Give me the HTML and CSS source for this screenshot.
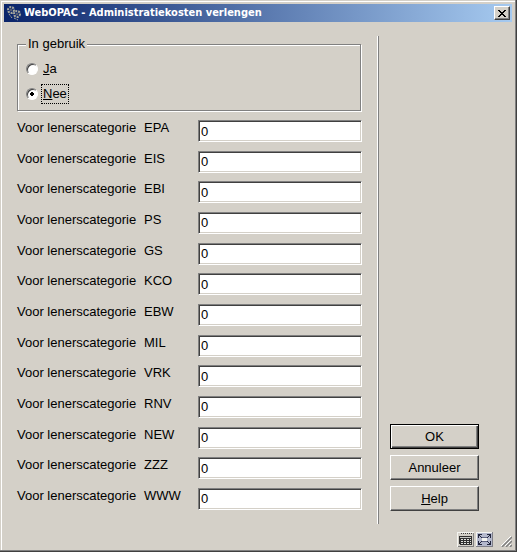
FILE: index.html
```
<!DOCTYPE html>
<html lang="nl">
<head>
    <meta charset="UTF-8">
    <meta name="viewport" content="width=device-width, initial-scale=1.0">
    <title>WebOPAC - Administratiekosten verlengen</title>
    <link rel="stylesheet" href="styles.css">
</head>
<body>

<form class="window">
    <header class="titlebar">
        <svg class="app-icon" width="16" height="16" viewBox="0 0 16 16">
            <g fill="none" stroke="#a8a89c">
                <circle cx="5" cy="5" r="3" stroke-width="2" stroke-dasharray="2 1"/>
                <circle cx="5" cy="5" r="1" stroke="#6c7078"/>
                <circle cx="11" cy="9" r="3" stroke-width="2" stroke-dasharray="2 1"/>
                <circle cx="11" cy="9" r="1" stroke="#6c7078"/>
                <path d="M3 9l3 4M8 13l4 2" stroke-dasharray="2 1"/>
            </g>
        </svg>
        <h1>WebOPAC - Administratiekosten verlengen</h1>
        <button type="button" class="close" aria-label="Sluiten">
            <svg width="8" height="7" viewBox="0 0 8 7" shape-rendering="crispEdges">
                <path d="M0 0h2v1h1v1h2v-1h1v-1h2v1h-1v1h-1v1h-1v1h1v1h1v1h1v1h-2v-1h-1v-1h-2v1h-1v1h-2v-1h1v-1h1v-1h1v-1h-1v-1h-1v-1h-1z"/>
            </svg>
        </button>
    </header>

    <main class="content">
        <div class="fields">
            <fieldset>
                <legend>In gebruik</legend>
                <label class="option"><input type="radio" name="gebruik"><span><u>J</u>a</span></label>
                <label class="option"><input type="radio" name="gebruik" checked><span class="focused"><u>N</u>ee</span></label>
            </fieldset>

            <div class="rows">
                <div class="row"><label for="epa"><span>Voor lenerscategorie</span><span>EPA</span></label><input type="text" id="epa" value="0"></div>
                <div class="row"><label for="eis"><span>Voor lenerscategorie</span><span>EIS</span></label><input type="text" id="eis" value="0"></div>
                <div class="row"><label for="ebi"><span>Voor lenerscategorie</span><span>EBI</span></label><input type="text" id="ebi" value="0"></div>
                <div class="row"><label for="ps"><span>Voor lenerscategorie</span><span>PS</span></label><input type="text" id="ps" value="0"></div>
                <div class="row"><label for="gs"><span>Voor lenerscategorie</span><span>GS</span></label><input type="text" id="gs" value="0"></div>
                <div class="row"><label for="kco"><span>Voor lenerscategorie</span><span>KCO</span></label><input type="text" id="kco" value="0"></div>
                <div class="row"><label for="ebw"><span>Voor lenerscategorie</span><span>EBW</span></label><input type="text" id="ebw" value="0"></div>
                <div class="row"><label for="mil"><span>Voor lenerscategorie</span><span>MIL</span></label><input type="text" id="mil" value="0"></div>
                <div class="row"><label for="vrk"><span>Voor lenerscategorie</span><span>VRK</span></label><input type="text" id="vrk" value="0"></div>
                <div class="row"><label for="rnv"><span>Voor lenerscategorie</span><span>RNV</span></label><input type="text" id="rnv" value="0"></div>
                <div class="row"><label for="new"><span>Voor lenerscategorie</span><span>NEW</span></label><input type="text" id="new" value="0"></div>
                <div class="row"><label for="zzz"><span>Voor lenerscategorie</span><span>ZZZ</span></label><input type="text" id="zzz" value="0"></div>
                <div class="row"><label for="www"><span>Voor lenerscategorie</span><span>WWW</span></label><input type="text" id="www" value="0"></div>
            </div>
        </div>

        <div class="actions">
            <button type="submit" class="btn default">OK</button>
            <button type="button" class="btn">Annuleer</button>
            <button type="button" class="btn"><u>H</u>elp</button>
        </div>
    </main>

    <footer class="statusbar">
        <svg width="17" height="15" viewBox="0 0 17 15" shape-rendering="crispEdges">
            <path fill="#f4f4f0" d="M0 0h17v1h-16v14h-1z"/>
            <path fill="#808080" d="M16 1h1v14h-16v-1h15z"/>
            <path stroke="#404040" stroke-dasharray="1 1" d="M4 1.5h11"/>
            <path fill="#303030" d="M2 4h13v9h-12v-1h-1z"/>
            <path fill="#c8c8c4" d="M3 5h11v1h-11z"/>
            <path stroke="#e0e0dc" stroke-dasharray="2 1" d="M4 7.5h10M4 9.5h10M4 11.5h10"/>
        </svg>
        <svg width="17" height="15" viewBox="0 0 17 15" shape-rendering="crispEdges">
            <path fill="#b4b8cc" d="M0 0h17v15H0z"/>
            <path fill="#f4f4f0" d="M0 0h16v1H1v13H0zM6 5h5v5H6z"/>
            <path fill="#808088" d="M16 0h1v15H0v-1h16z"/>
            <path fill="#20243c" d="M2 2h4v1H4v1h1v1h1v1H5V5H4V4H3v2H2zM15 2h-4v1h2v1h-1v1h-1v1h1V5h1V4h1v2h1zM2 13h4v-1H4v-1h1v-1h1V9H5v1H4v1H3V9H2zM15 13h-4v-1h2v-1h-1v-1h-1V9h1v1h1v1h1V9h1z"/>
            <path fill="#606480" d="M6 5h5v1H6zM6 9h5v1H6z"/>
        </svg>
        <svg class="grip" width="11" height="11" viewBox="0 0 11 11">
            <path stroke="#fff" d="M0 10L10 0M4 10l6-6M8 10l2-2"/>
            <path stroke="#808080" stroke-width="1.5" d="M1 11L11 1M5 11l6-6M9 11l2-2"/>
        </svg>
    </footer>
</form>

</body>
</html>
```
FILE: styles.css
```
* {
    box-sizing: border-box;
}
body {
    margin: 0;
    background-color: #d4d0c8;
    color: #000;
    font-family: "Liberation Sans", Arial, sans-serif;
    font-size: 13px;
    line-height: 16px;
}
input, button {
    font: inherit;
    color: inherit;
}
.window {
    display: flex;
    flex-direction: column;
    min-height: 100vh;
    padding: 4px;
    border: solid;
    border-width: 0 1px 1px 0;
    border-color: #404040;
    box-shadow: inset -1px -1px #808080, inset 1px 1px #d4d0c8, inset 2px 2px #fff;
}
.titlebar {
    display: flex;
    align-items: center;
    height: 18px;
    padding: 0 2px;
    background: linear-gradient(to right, #0a246a, #a6caf0);
    color: #fff;
}
.titlebar h1 {
    flex: 1;
    margin: 0 0 0 2px;
    font: bold 11px/18px "DejaVu Sans Condensed", Tahoma, sans-serif;
    white-space: nowrap;
}
.close, .btn {
    display: flex;
    align-items: center;
    justify-content: center;
    padding: 0;
    border: 1px solid;
    border-color: #fff #404040 #404040 #fff;
    background-color: #d4d0c8;
    box-shadow: inset -1px -1px #808080;
}
.close {
    width: 16px;
    height: 14px;
    color: #000;
}
.content {
    display: flex;
    flex: 1;
    padding: 14px 33px 0 13px;
}
.fields {
    display: flex;
    flex: 1;
    flex-direction: column;
    min-width: 0;
    padding: 0 15px 14px 0;
}
fieldset {
    min-width: 0;
    margin: 0 1px 9px 0;
    padding: 4px 8px;
    border: 1px solid #808080;
    box-shadow: 1px 1px #fff, inset 1px 1px #fff;
}
legend {
    padding: 0 2px;
    background-color: #d4d0c8;
}
.option {
    display: flex;
    align-items: center;
    gap: 3px;
    height: 25px;
}
.option span {
    padding: 1px;
    border: 1px solid transparent;
}
.option .focused {
    border: 1px dotted #000;
}
.option input {
    appearance: none;
    width: 12px;
    height: 12px;
    margin: 0;
    border: 1px solid;
    border-color: #808080 #fff #fff #808080;
    border-radius: 50%;
    background-color: #fff;
    box-shadow: inset 1px 1px #404040;
}
.option input:checked {
    background-image: radial-gradient(circle, #000 2px, transparent 2px);
}
.rows {
    display: flex;
    flex: 1;
    flex-direction: column;
    justify-content: space-between;
}
.row {
    display: flex;
}
.row label {
    display: grid;
    grid-template-columns: 127px 54px;
}
.row input {
    flex: 1;
    min-width: 0;
    height: 22px;
    padding: 1px 2px;
    border: 1px solid;
    border-color: #808080 #fff #fff #808080;
    border-radius: 0;
    background-color: #fff;
    box-shadow: inset 1px 1px #404040, inset -1px -1px #d4d0c8;
}
.actions {
    display: flex;
    flex-direction: column;
    justify-content: flex-end;
    gap: 6px;
    padding: 0 0 13px 12px;
    border-left: 1px solid #fff;
    box-shadow: inset 1px 0 #808080;
}
.btn {
    width: 89px;
    height: 25px;
}
.btn.default {
    border-color: #000;
    box-shadow: inset 1px 1px #fff, inset -1px -1px #404040, inset -2px -2px #808080;
}
.statusbar {
    display: flex;
    align-items: flex-end;
    justify-content: flex-end;
    gap: 2px;
    height: 23px;
}
.grip {
    margin-left: 6px;
}
```
